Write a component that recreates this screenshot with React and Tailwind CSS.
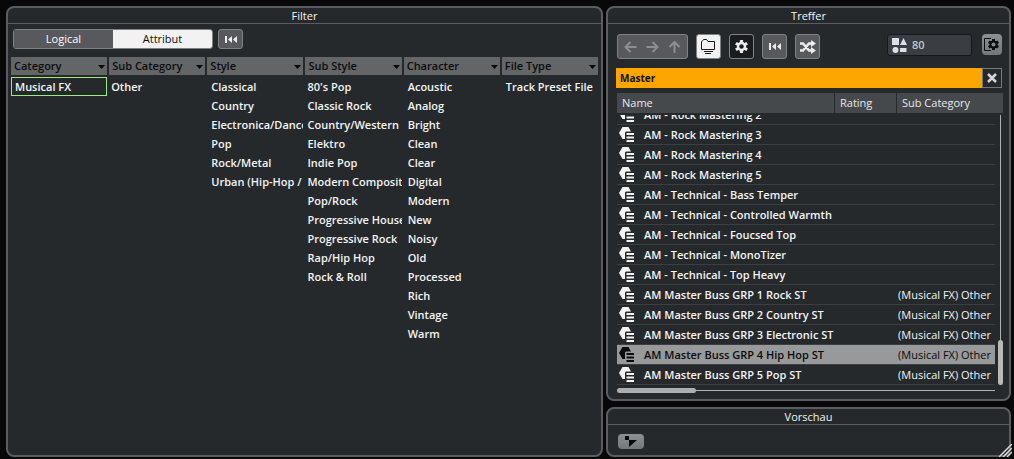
import { useState } from "react";

const columns = [
  { label: "Category", pad: "pl-1", items: ["Musical FX"] },
  { label: "Sub Category", pad: "pl-0.5", items: ["Other"] },
  {
    label: "Style",
    pad: "pl-1",
    items: ["Classical", "Country", "Electronica/Dance", "Pop", "Rock/Metal", "Urban (Hip-Hop /"],
  },
  {
    label: "Sub Style",
    pad: "pl-0.5",
    items: [
      "80's Pop",
      "Classic Rock",
      "Country/Western",
      "Elektro",
      "Indie Pop",
      "Modern Composit",
      "Pop/Rock",
      "Progressive House",
      "Progressive Rock",
      "Rap/Hip Hop",
      "Rock & Roll",
    ],
  },
  {
    label: "Character",
    pad: "pl-1",
    items: [
      "Acoustic",
      "Analog",
      "Bright",
      "Clean",
      "Clear",
      "Digital",
      "Modern",
      "New",
      "Noisy",
      "Old",
      "Processed",
      "Rich",
      "Vintage",
      "Warm",
    ],
  },
  { label: "File Type", pad: "pl-1", items: ["Track Preset File"] },
];

const results = [
  { name: "AM - Rock Mastering 2", sub: "" },
  { name: "AM - Rock Mastering 3", sub: "" },
  { name: "AM - Rock Mastering 4", sub: "" },
  { name: "AM - Rock Mastering 5", sub: "" },
  { name: "AM - Technical - Bass Temper", sub: "" },
  { name: "AM - Technical - Controlled Warmth", sub: "" },
  { name: "AM - Technical - Foucsed Top", sub: "" },
  { name: "AM - Technical - MonoTizer", sub: "" },
  { name: "AM - Technical - Top Heavy", sub: "" },
  { name: "AM Master Buss GRP 1 Rock ST", sub: "(Musical FX) Other" },
  { name: "AM Master Buss GRP 2 Country ST", sub: "(Musical FX) Other" },
  { name: "AM Master Buss GRP 3 Electronic ST", sub: "(Musical FX) Other" },
  { name: "AM Master Buss GRP 4 Hip Hop ST", sub: "(Musical FX) Other" },
  { name: "AM Master Buss GRP 5 Pop ST", sub: "(Musical FX) Other" },
];

const RewindIcon = () => (
  <svg width="12" height="7" viewBox="0 0 12 7" fill="#ececec">
    <path d="M0 0h2v7H0zM7 0v7L3 3.500zM12 0v7L8 3.500z" />
  </svg>
);

const ArrowIcon = ({ className = "" }) => (
  <svg className={className} width="13" height="12" viewBox="0 0 13 12" fill="none" stroke="#8d8e91" strokeWidth="2">
    <path d="M12.500 6H1.500M6.500 1L1.500 6l5 5" />
  </svg>
);

const FolderIcon = () => (
  <svg width="15" height="16" viewBox="0 0 15 16" fill="none" stroke="#161819" strokeWidth="1">
    <path d="M3 10.500H.5V3l2-2.500h3L7 2.500h6.500v8H11" />
    <path d="M3 10.500h9M3 12.500h9M4 14.500h6" />
  </svg>
);

const GearIcon = ({ size, color, hole }) => (
  <svg width={size} height={size} viewBox="0 0 14 14">
    <g fill={color}>
      <circle cx="7" cy="7" r="5" />
      <path d="M5.300 0h3.400v14H5.300z" />
      <path d="M5.300 0h3.400v14H5.300z" transform="rotate(60 7 7)" />
      <path d="M5.300 0h3.400v14H5.300z" transform="rotate(120 7 7)" />
    </g>
    <circle cx="7" cy="7" r="2.400" fill={hole} />
  </svg>
);

const ShuffleIcon = () => (
  <svg width="16" height="14" viewBox="0 0 16 14">
    <path d="M0 3.500h3l6 7h3M0 10.500h3l6-7h3" fill="none" stroke="#ececec" strokeWidth="2.500" />
    <path d="M11 0l5 3.500-5 3.500zM11 7l5 3.500-5 3.500z" fill="#ececec" />
  </svg>
);

const ShapesIcon = () => (
  <svg width="15" height="15" viewBox="0 0 15 15" fill="#dedfe6">
    <path d="M0 0h7v7H0zM11.500 0L15 7H8zM8 10h6.500v4H8z" />
    <circle cx="3.500" cy="12" r="3" />
  </svg>
);

const PresetIcon = () => (
  <svg width="16" height="15" viewBox="0 0 16 15" fill="currentColor">
    <path d="M3.500 0h6l2.500 4.500H7L6 5.500V12H3.500L0 6z" />
    <path d="M7.500 6H15v2H7.500zM7.500 9.500H15v2H7.500zM7.500 13H15v2H7.500z" />
  </svg>
);

const Panel = ({ title, className = "", children }) => (
  <section
    className={`flex min-h-0 flex-col overflow-hidden rounded-lg border-2 border-[#5c5d60] bg-[#25292c] ${className}`}
  >
    <h2 className="h-4 shrink-0 border-b border-[#5c5d60] text-center leading-4 font-normal">{title}</h2>
    {children}
  </section>
);

const ToolButton = ({ label, className = "bg-[#58595c]", children }) => (
  <button
    aria-label={label}
    className={`flex size-[25px] items-center justify-center rounded-[3px] border border-[#818286] ${className}`}
  >
    {children}
  </button>
);

const FilterPanel = () => {
  const [mode, setMode] = useState("Attribut");

  return (
    <Panel title="Filter" className="flex-[593]">
      <div className="flex items-center gap-[5px] px-[5px] pt-[5px]">
        <div className="flex h-5 w-[200px] overflow-hidden rounded-[3px] border border-[#818286]">
          {["Logical", "Attribut"].map((name) => (
            <button
              key={name}
              onClick={() => setMode(name)}
              className={`flex-1 leading-4 ${mode === name ? "bg-[#f2f2f2] text-[#111]" : "bg-[#58595c] text-white"}`}
            >
              {name}
            </button>
          ))}
        </div>
        <button
          aria-label="Reset filter"
          className="flex h-5 w-[25px] items-center justify-center rounded-[3px] border border-[#818286] bg-[#58595c]"
        >
          <RewindIcon />
        </button>
      </div>

      <div className="grid grid-cols-6 gap-0.5 px-[3px] pt-2 font-semibold">
        {columns.map((col) => (
          <div key={col.label} className="min-w-0">
            <div className="relative">
              <select
                aria-label={`${col.label} attribute`}
                className="block h-[18px] w-full appearance-none bg-[#646566] pl-[3px] leading-[18px] text-[#0c0d0e]"
              >
                <option>{col.label}</option>
              </select>
              <svg
                className="pointer-events-none absolute top-2 right-0.5"
                width="7"
                height="4"
                viewBox="0 0 7 4"
                fill="#08090a"
              >
                <path d="M0 0h7L3.500 4z" />
              </svg>
            </div>
            <ul className="mt-0.5">
              {col.items.map((item) => (
                <li
                  key={item}
                  className={`h-[19px] overflow-hidden leading-[19px] whitespace-nowrap ${col.pad} ${
                    item === "Musical FX" ? "shadow-[inset_0_0_0_1px_#94f07a]" : ""
                  }`}
                >
                  {item}
                </li>
              ))}
            </ul>
          </div>
        ))}
      </div>
    </Panel>
  );
};

const ResultsPanel = () => {
  const [query, setQuery] = useState("Master");
  const [selected, setSelected] = useState("AM Master Buss GRP 4 Hip Hop ST");

  return (
    <Panel title="Treffer" className="flex-1">
      {/* Toolbar */}
      <div className="flex gap-2 pt-[10px] pr-[7px] pl-[9px]">
        <div className="flex h-[25px] w-[71px] items-center justify-around rounded-[3px] border border-[#818286] bg-[#58595c] px-0.5">
          <button aria-label="Back">
            <ArrowIcon />
          </button>
          <button aria-label="Forward">
            <ArrowIcon className="rotate-180" />
          </button>
          <button aria-label="Up">
            <ArrowIcon className="rotate-90" />
          </button>
        </div>
        <ToolButton label="Show folders" className="bg-[#f2f2f2]">
          <FolderIcon />
        </ToolButton>
        <ToolButton label="Media types" className="bg-[#1a1b1f]">
          <GearIcon size={13} color="#ececec" hole="#1a1b1f" />
        </ToolButton>
        <ToolButton label="Reset">
          <RewindIcon />
        </ToolButton>
        <ToolButton label="Shuffle results">
          <ShuffleIcon />
        </ToolButton>
        <output className="ml-auto flex h-[22px] w-[85px] items-center gap-[5px] rounded-[3px] border border-[#15171a] bg-[#3a3d42] pl-1 font-semibold text-[#c5c9ce]">
          <ShapesIcon />
          80
        </output>
        <button
          aria-label="Set up window"
          className="ml-0.5 flex h-[21px] w-5 items-center justify-center rounded-sm bg-linear-to-b from-[#8d9093] to-[#75787b]"
        >
          <svg width="16" height="13" viewBox="0 0 16 13">
            <path d="M7 .5H.5v12H7" fill="none" stroke="#0b0c0d" />
            <g fill="#0b0c0d">
              <circle cx="9.500" cy="6.500" r="4" />
              <path d="M8 1h3v11H8z" />
              <path d="M8 1h3v11H8z" transform="rotate(60 9.500 6.500)" />
              <path d="M8 1h3v11H8z" transform="rotate(120 9.500 6.500)" />
            </g>
            <circle cx="9.500" cy="6.500" r="2" fill="#85888b" />
          </svg>
        </button>
      </div>

      {/* Search */}
      <div className="mt-[9px] mr-[7px] ml-2 flex h-5 shrink-0">
        <input
          type="text"
          aria-label="Search"
          value={query}
          onChange={(e) => setQuery(e.target.value)}
          className="min-w-0 flex-1 bg-[#ffa500] px-1 text-[10px] font-bold text-[#141002] outline-none"
        />
        <button
          aria-label="Clear search"
          onClick={() => setQuery("")}
          className="flex w-5 items-center justify-center border border-[#77787b]"
        >
          <svg width="10" height="10" viewBox="0 0 10 10" stroke="#d5d5d5" strokeWidth="2.500">
            <path d="M1 1l8 8M9 1L1 9" />
          </svg>
        </button>
      </div>

      {/* Result list */}
      <div className="relative mt-[5px] mr-1.5 ml-[9px] flex min-h-0 flex-1 flex-col">
        <table className="flex min-h-0 flex-1 flex-col">
          <thead className="block shrink-0">
            <tr className="flex h-5 gap-px text-left leading-5 text-[#e8e8e8]">
              <th className="flex-1 bg-[#45494b] pl-[5px] font-normal">Name</th>
              <th className="w-[61px] bg-[#45494b] pl-[5px] font-normal">Rating</th>
              <th className="w-[106px] bg-[#45494b] pl-[5px] font-normal">Sub Category</th>
            </tr>
          </thead>
          <tbody className="mt-0.5 mr-2 flex min-h-0 flex-1 flex-col justify-end overflow-hidden">
            {results.map((row) => (
              <tr
                key={row.name}
                onClick={() => setSelected(row.name)}
                className={`flex h-5 shrink-0 items-center border-b border-[#3b3f42] leading-[19px] ${
                  selected === row.name ? "bg-[#98999a] text-[#0c0c0c]" : "text-[#f4f4f4]"
                }`}
              >
                <td className="w-[27px] pl-0.5">
                  <PresetIcon />
                </td>
                <td className="flex-1 font-semibold whitespace-nowrap">{row.name}</td>
                <td className="w-[97px] whitespace-nowrap">{row.sub}</td>
              </tr>
            ))}
          </tbody>
        </table>
        <div className="mt-[3px] mr-2 mb-[6px] flex h-[5px] items-center bg-[linear-gradient(#b0b0b0,#b0b0b0)] bg-[length:100%_1px] bg-center bg-no-repeat">
          <div className="h-[5px] w-[21%] rounded-sm bg-[#aeaeae]" />
        </div>
        <div className="absolute top-[22px] right-0 bottom-[14px] flex w-[5px] items-end bg-[linear-gradient(#b0b0b0,#b0b0b0)] bg-[length:1px_100%] bg-center bg-no-repeat">
          <div className="h-[45px] w-full rounded-sm bg-[#b8b8b8]" />
        </div>
      </div>
    </Panel>
  );
};

const PreviewPanel = () => (
  <Panel title="Vorschau" className="h-[50px] shrink-0">
    <button
      aria-label="Expand preview"
      className="mt-[9px] ml-2.5 flex h-[15px] w-[26px] items-center justify-center rounded-sm bg-linear-to-b from-[#8d9093] to-[#75787b]"
    >
      <svg width="12" height="11" viewBox="0 0 12 11" fill="#08090a">
        <path d="M0 0h4v4H0zM4 4h8l-8 7z" />
      </svg>
    </button>
  </Panel>
);

export default function App() {
  return (
    <main className="relative flex h-screen gap-[3px] bg-[#080808] pt-1.5 pr-[3px] pb-0.5 pl-1.5 font-['Open_Sans','Noto_Sans',sans-serif] text-[11px] text-[#f4f4f4]">
      <FilterPanel />
      <div className="flex min-w-0 flex-[405] flex-col gap-1.5">
        <ResultsPanel />
        <PreviewPanel />
      </div>
      <svg
        className="absolute right-0.5 bottom-0.5"
        width="13"
        height="13"
        viewBox="0 0 13 13"
        stroke="#d8d8d8"
        strokeWidth="1.500"
      >
        <path d="M0 13L13 0M4 13l9-9M8 13l5-5" />
      </svg>
    </main>
  );
}
